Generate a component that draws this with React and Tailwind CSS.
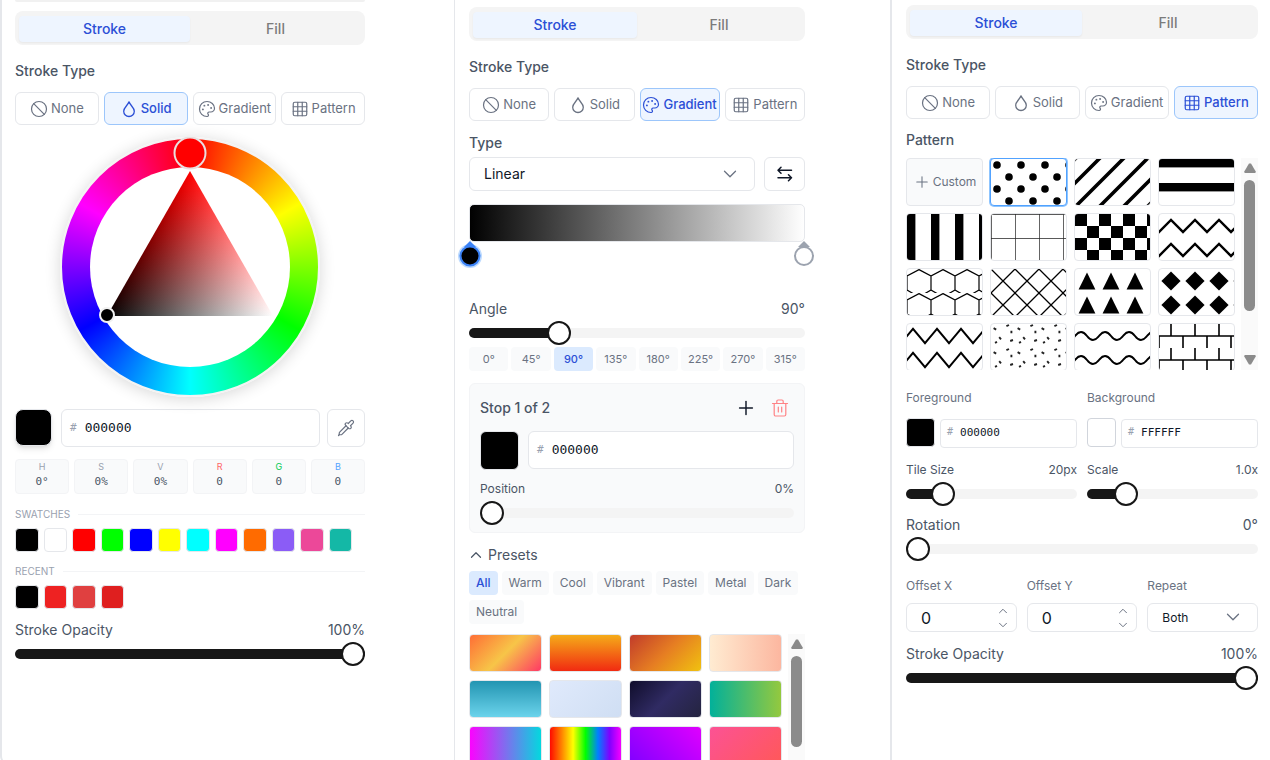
import React, { useState } from "react";
import {
  Ban,
  ChevronDown,
  ChevronUp,
  Grid3x3,
  Palette,
  Pipette,
  Plus,
} from "lucide-react";

const DropIcon = ({ className }) => (
  <svg viewBox="0 0 18 18" fill="none" stroke="currentColor" strokeWidth="1.3" strokeLinejoin="round" className={className}>
    <path d="M9 1.800C8.100 5 3.700 7.600 3.700 11.200a5.300 5.300 0 0 0 10.600 0C14.300 7.600 9.900 5 9 1.800z" />
  </svg>
);

const SwapIcon = ({ className }) => (
  <svg viewBox="0 0 16 16" fill="none" stroke="currentColor" strokeWidth="1.5" strokeLinecap="round" strokeLinejoin="round" className={className}>
    <path d="M14.5 4.2H1M4 1.2l-3 3 3 3M1 11.8h13.5M11.5 8.8l3 3-3 3" />
  </svg>
);

const TrashIcon = ({ className }) => (
  <svg viewBox="0 0 18 18" fill="none" stroke="currentColor" strokeWidth="1.2" strokeLinecap="round" strokeLinejoin="round" className={className}>
    <path d="M1.500 4.500h15M3.200 4.500v11a1.500 1.500 0 0 0 1.500 1.500h8.600a1.500 1.500 0 0 0 1.500-1.500v-11M5.800 4.500V2.300a1.300 1.300 0 0 1 1.300-1.300h3.800a1.300 1.300 0 0 1 1.300 1.300v2.200M7.300 8v5M10.700 8v5" />
  </svg>
);

const strokeTypes = [
  { name: "None", Icon: Ban },
  { name: "Solid", Icon: DropIcon },
  { name: "Gradient", Icon: Palette },
  { name: "Pattern", Icon: Grid3x3 },
];

const channels = [
  { name: "H", value: "0°", color: "text-gray-400" },
  { name: "S", value: "0%", color: "text-gray-400" },
  { name: "V", value: "0%", color: "text-gray-400" },
  { name: "R", value: "0", color: "text-red-400" },
  { name: "G", value: "0", color: "text-green-500" },
  { name: "B", value: "0", color: "text-blue-400" },
];

const swatches = [
  "#000000", "#ffffff", "#ff0000", "#00ff00", "#0000ff", "#ffff00",
  "#00ffff", "#ff00ff", "#ff6b00", "#8b5cf6", "#ec4899", "#14b8a6",
];
const recent = ["#000000", "#ee2222", "#e04040", "#df1f1f"];

const angles = [0, 45, 90, 135, 180, 225, 270, 315];
const categories = ["All", "Warm", "Cool", "Vibrant", "Pastel", "Metal", "Dark", "Neutral"];

const presets = [
  "linear-gradient(135deg, #ff6b35, #f7c548 50%, #ff3366)",
  "linear-gradient(180deg, #f5af19, #f12711)",
  "linear-gradient(135deg, #c0392b, #e67e22 50%, #f1c40f)",
  "linear-gradient(90deg, #ffecd2, #fcb69f)",
  "linear-gradient(180deg, #2193b0, #6dd5ed)",
  "linear-gradient(135deg, #e0eafc, #cfdef3)",
  "linear-gradient(135deg, #0f0c29, #302b63 50%, #24243e)",
  "linear-gradient(90deg, #00b09b, #96c93d)",
  "linear-gradient(90deg, #ff00ff, #00dbde)",
  "linear-gradient(90deg, #ff0000, #ff8000 17%, #ffff00 33%, #00ff00 50%, #0080ff 67%, #8000ff 83%, #ff00ff)",
  "linear-gradient(45deg, #7f00ff, #e100ff)",
  "linear-gradient(135deg, #fc5296, #ff5858)",
];

// every pattern is drawn on a 24 x 24 tile
const patterns = [
  {
    name: "Dots",
    shape: (
      <>
        <circle cx="6" cy="6" r="3.8" />
        <circle cx="18" cy="18" r="3.8" />
      </>
    ),
  },
  { name: "Diagonal", shape: <path d="M-6 30L30-6M-6 6L6-6M18 30L30 18" stroke="#000" strokeWidth="3.6" /> },
  { name: "Horizontal", shape: <rect width="24" height="8.4" /> },
  { name: "Vertical", shape: <rect width="8.4" height="24" /> },
  { name: "Grid", shape: <path d="M24 0H0V24" fill="none" stroke="#222" strokeWidth="1.4" /> },
  { name: "Checkerboard", shape: <path d="M0 0h12v12H0zM12 12h12v12H12z" /> },
  { name: "Chevron", shape: <path d="M-6 12L0 18 12 6l12 12 6-6" fill="none" stroke="#000" strokeWidth="2.4" /> },
  { name: "Hexagon", shape: <path d="M12 0.6L24 7v14l-12 7L0 21V7z" fill="none" stroke="#000" strokeWidth="1.2" /> },
  { name: "Crosshatch", shape: <path d="M-1-1L25 25M25-1L-1 25" stroke="#000" strokeWidth="1.3" /> },
  { name: "Triangles", shape: <path d="M12 3.6l8.4 16.8H3.6z" /> },
  { name: "Diamonds", shape: <path d="M12 2.4l9.6 9.6-9.6 9.6L2.4 12z" /> },
  { name: "Zigzag", shape: <path d="M-6 19.2L6 4.8l12 14.4L30 4.8" fill="none" stroke="#000" strokeWidth="2" /> },
  {
    name: "Confetti",
    shape: (
      <path
        d="M2.6 4.2l2.6 1.400M15.400 2.200l2.600-1.200M20.400 6.800v2.400M8.200 13.200l1.800 2.200M4 18.800l2-1M19.200 17l2.800-1"
        stroke="#222"
        strokeWidth="1.9"
      />
    ),
  },
  { name: "Waves", shape: <path d="M-12 12Q-6 20 0 12T12 12 24 12 36 12" fill="none" stroke="#000" strokeWidth="2" /> },
  { name: "Brick", shape: <path d="M12 0v12M0 12h24M0 12v12M24 12v12" stroke="#000" strokeWidth="1.6" /> },
];

const Tabs = () => (
  <div className="flex h-[34px] rounded-lg bg-[#f4f4f4] pt-[5px] pr-1 pb-[3px] pl-1 text-sm font-medium">
    <button type="button" className="flex flex-1 items-center justify-center rounded bg-[#eef5ff] text-[#2b4fd6] shadow-xs">
      Stroke
    </button>
    <button type="button" className="flex flex-1 items-center justify-center text-[#7b7b7b]">
      Fill
    </button>
  </div>
);

const StrokeType = ({ active }) => (
  <>
    <h2 className="mt-4 text-sm font-medium text-gray-600">Stroke Type</h2>
    <div className="mt-[11px] grid grid-cols-4 gap-[5px]">
      {strokeTypes.map(({ name, Icon }) => (
        <button
          key={name}
          type="button"
          className={
            name === active
              ? "flex h-[33px] items-center justify-center gap-[3px] rounded-md border border-[#9cc6fb] bg-[#eef5ff] text-[13px] font-medium text-[#2b4fd6]"
              : "flex h-[33px] items-center justify-center gap-[3px] rounded-md border border-gray-200 text-[13px] text-gray-500"
          }
        >
          <Icon className="size-[18px] shrink-0" strokeWidth={1.6} />
          {name}
        </button>
      ))}
    </div>
  </>
);

const Slider = ({ label, min = 0, max = 100, step = 1, initial, format, small, className }) => {
  const [value, setValue] = useState(initial);
  const percent = ((value - min) / (max - min)) * 100;
  return (
    <label className={`flex flex-col text-gray-600 ${className}`}>
      <span className={small ? "flex justify-between text-xs" : "flex justify-between text-sm"}>
        <span>{label}</span>
        <span>{format(value)}</span>
      </span>
      <input
        type="range"
        min={min}
        max={max}
        step={step}
        value={value}
        onChange={(e) => setValue(Number(e.target.value))}
        className={`${small ? "mt-[11px]" : "mt-[9px]"} h-[10px] w-full appearance-none rounded-full [&::-webkit-slider-thumb]:size-6 [&::-webkit-slider-thumb]:appearance-none [&::-webkit-slider-thumb]:rounded-full [&::-webkit-slider-thumb]:border-2 [&::-webkit-slider-thumb]:border-[#171717] [&::-webkit-slider-thumb]:bg-white`}
        style={{ background: `linear-gradient(to right, #171717 ${percent}%, #f4f4f4 ${percent}%)` }}
      />
    </label>
  );
};

const HexInput = ({ label, initial, small }) => {
  const [hex, setHex] = useState(initial);
  return (
    <label
      className={
        small
          ? "flex h-[29px] min-w-0 flex-1 items-center gap-[7px] self-end rounded border border-gray-200 bg-white px-[6px]"
          : "flex h-[38px] min-w-0 flex-1 items-center gap-2 rounded-md border border-gray-200 bg-white px-2"
      }
    >
      <span className={small ? "pb-1 font-['DejaVu_Sans_Mono',monospace] text-[10px] text-gray-400" : "font-['DejaVu_Sans_Mono',monospace] text-[11px] text-gray-400"}>
        #
      </span>
      <input
        aria-label={label}
        value={hex}
        onChange={(e) => setHex(e.target.value)}
        className={
          small
            ? "w-full min-w-0 font-['DejaVu_Sans_Mono',monospace] text-[11px] text-gray-900 outline-none"
            : "w-full min-w-0 font-['DejaVu_Sans_Mono',monospace] text-[13px] text-gray-900 outline-none"
        }
      />
    </label>
  );
};

const ColorWheel = () => (
  <div className="relative mx-auto mt-3 size-[260px] rounded-full border-2 border-[#f3f3f3] bg-[conic-gradient(#f00,#ff0,#0f0,#0ff,#00f,#f0f,#f00)] p-7 shadow-[0_2px_16px_rgba(0,0,0,0.16)]">
    <div className="size-full rounded-full bg-white" />
    <svg viewBox="-130 -130 260 260" className="absolute -inset-[2px]">
      <defs>
        <linearGradient id="hueFade" gradientUnits="userSpaceOnUse" x1="0" y1="49" x2="0" y2="-96">
          <stop offset="0" stopColor="#000" />
          <stop offset="1" stopColor="#f00" />
        </linearGradient>
        <linearGradient id="whiteFade" gradientUnits="userSpaceOnUse" x1="-41.5" y1="-23.5" x2="83" y2="49">
          <stop offset="0" stopColor="#000" />
          <stop offset="1" stopColor="#fff" />
        </linearGradient>
        <clipPath id="triangle">
          <path d="M0-96L83 49H-83z" />
        </clipPath>
      </defs>
      <g className="isolate" clipPath="url(#triangle)">
        <rect x="-90" y="-100" width="180" height="155" fill="url(#hueFade)" />
        <rect x="-90" y="-100" width="180" height="155" fill="url(#whiteFade)" className="mix-blend-plus-lighter" />
      </g>
      <circle cx="0" cy="-114" r="15.5" fill="#f00" stroke="#eadede" strokeWidth="2" />
      <circle cx="-83" cy="48" r="7" fill="#000" stroke="#f1f1f1" strokeWidth="2" />
    </svg>
  </div>
);

const SwatchRow = ({ title, colors, className }) => (
  <div className={className}>
    <div className="flex items-center gap-2 text-[10px] leading-4 text-gray-400">
      {title}
      <span className="h-px flex-1 bg-gray-100" />
    </div>
    <div className="mt-[6px] grid grid-cols-12 gap-[5px] pr-[13px]">
      {colors.map((color) => (
        <button
          key={color}
          type="button"
          aria-label={color}
          className="h-6 rounded border border-gray-200"
          style={{ backgroundColor: color }}
        />
      ))}
    </div>
  </div>
);

const ScrollArrow = ({ down }) => (
  <svg viewBox="0 0 12 10" className="h-[10px] w-3 fill-[#8b8b8b]">
    {down ? <path d="M1 0h10l1 1-5 8.500H5L0 1z" /> : <path d="M1 10h10l1-1L7 .5H5L0 9z" />}
  </svg>
);

const SolidPanel = () => (
  <section className="pr-[89px] pl-[13px]">
    <div className="h-[2px] rounded-b bg-[#f1f1f1]" />
    <div className="pt-[9px]">
      <Tabs />
      <StrokeType active="Solid" />
      <ColorWheel />
      <div className="mt-3 flex gap-[7px]">
        <button type="button" aria-label="Current color" className="mr-[2px] size-[37px] rounded-lg border border-gray-200 bg-black shadow-md" />
        <HexInput label="Stroke color" initial="000000" />
        <button type="button" aria-label="Pick color" className="flex size-[38px] items-center justify-center rounded-md border border-gray-200 text-gray-500">
          <Pipette className="size-[18px]" strokeWidth={1.6} />
        </button>
      </div>
      <dl className="mt-3 grid grid-cols-6 gap-[5px]">
        {channels.map((channel) => (
          <div key={channel.name} className="h-[35px] rounded border border-gray-100 bg-gray-50 text-center">
            <dt className={`text-[9px] leading-[14px] ${channel.color}`}>{channel.name}</dt>
            <dd className="font-['DejaVu_Sans_Mono',monospace] text-[11px] leading-4 text-gray-600">{channel.value}</dd>
          </div>
        ))}
      </dl>
      <SwatchRow title="SWATCHES" colors={swatches} className="mt-3" />
      <SwatchRow title="RECENT" colors={recent} className="mt-[11px]" />
      <Slider label="Stroke Opacity" initial={100} format={(v) => `${v}%`} className="mt-[11px]" />
    </div>
  </section>
);

const GradientPanel = () => (
  <section className="border-l border-gray-200 pt-[7px] pr-[85px] pl-[14px]">
    <Tabs />
    <StrokeType active="Gradient" />
    <label htmlFor="gradient-type" className="mt-3 block text-sm font-medium text-gray-600">
      Type
    </label>
    <div className="mt-1 flex gap-[9px]">
      <div className="relative flex-1">
        <select id="gradient-type" className="h-[34px] w-full appearance-none rounded-md border border-gray-200 px-[14px] text-sm text-gray-900">
          <option>Linear</option>
          <option>Radial</option>
        </select>
        <ChevronDown className="pointer-events-none absolute top-[6px] right-[14px] size-[22px] text-gray-500" strokeWidth={1.4} />
      </div>
      <button type="button" aria-label="Reverse gradient" className="flex h-[34px] w-[41px] items-center justify-center rounded-md border border-gray-200 text-gray-900">
        <SwapIcon className="size-4" />
      </button>
    </div>
    <div className="relative mt-[13px] h-[38px] rounded-[5px] border border-gray-200 bg-[linear-gradient(to_right,#000,#fff)] bg-origin-border">
      <button type="button" aria-label="Stop 1" className="absolute top-full -left-3 w-6">
        <svg viewBox="0 0 24 28" className="w-6">
          <circle cx="12" cy="15" r="12" fill="#bfdbfe" />
          <path d="M12 0l6 6H6z" fill="#3b82f6" />
          <circle cx="12" cy="15" r="9.5" fill="#000" stroke="#3b82f6" strokeWidth="2" />
        </svg>
      </button>
      <button type="button" aria-label="Stop 2" className="absolute top-full -right-3 w-6">
        <svg viewBox="0 0 24 28" className="w-6">
          <path d="M12 0l6 6H6z" fill="#9ca3af" />
          <circle cx="12" cy="15" r="9" fill="#fff" stroke="#9ca3af" strokeWidth="2" />
        </svg>
      </button>
    </div>
    <Slider label="Angle" max={360} initial={90} format={(v) => `${v}°`} className="mt-[57px]" />
    <div className="mt-[9px] grid grid-cols-8 gap-[3px]">
      {angles.map((angle) => (
        <button
          key={angle}
          type="button"
          className={
            angle === 90
              ? "h-6 rounded bg-blue-100 text-[11px] font-medium text-[#2b4fd6]"
              : "h-6 rounded bg-gray-50 text-[11px] text-gray-500"
          }
        >
          {angle}°
        </button>
      ))}
    </div>
    <div className="mt-3 rounded-md border border-gray-100 bg-gray-50 px-[10px] pt-[13px] pb-[14px]">
      <div className="flex items-center text-sm font-medium text-gray-600">
        <span className="flex-1">Stop 1 of 2</span>
        <button type="button" aria-label="Add stop" className="mr-[14px] text-gray-900">
          <Plus className="size-[22px]" strokeWidth={1.6} />
        </button>
        <button type="button" aria-label="Delete stop" className="mr-[5px] text-red-400/80">
          <TrashIcon className="size-[18px]" />
        </button>
      </div>
      <div className="mt-3 flex gap-[9px]">
        <button type="button" aria-label="Stop color" className="size-[39px] rounded-md border border-gray-200 bg-black" />
        <HexInput label="Stop color value" initial="000000" />
      </div>
      <Slider label="Position" small initial={0} format={(v) => `${v}%`} className="mt-[11px]" />
    </div>
    <button type="button" className="mt-3 flex items-center gap-[3px] text-sm text-gray-600">
      <ChevronUp className="-ml-[2px] size-[18px]" strokeWidth={1.6} />
      Presets
    </button>
    <div className="mt-[6px] flex flex-wrap gap-x-1 gap-y-[5px]">
      {categories.map((category) => (
        <button
          key={category}
          type="button"
          className={
            category === "All"
              ? "h-6 rounded bg-blue-100 px-[7px] text-xs font-medium text-[#2b4fd6]"
              : "h-6 rounded bg-gray-50 px-[7px] text-xs text-gray-500"
          }
        >
          {category}
        </button>
      ))}
    </div>
    <div className="mt-[10px] flex gap-[6px]">
      <div className="grid flex-1 grid-cols-4 gap-x-[7px] gap-y-2">
        {presets.map((preset) => (
          <button
            key={preset}
            type="button"
            aria-label="Gradient preset"
            className="h-[38px] rounded border border-gray-200 bg-origin-border"
            style={{ backgroundImage: preset }}
          />
        ))}
      </div>
      <div className="flex w-[17px] flex-col items-center bg-[#fafafa] pt-[5px]">
        <ScrollArrow />
        <div className="mt-[7px] h-[91px] w-[11px] rounded-full bg-[#8b8b8b]" />
      </div>
    </div>
  </section>
);

const PatternTile = ({ pattern, selected }) => (
  <button
    type="button"
    aria-label={pattern.name}
    className={
      selected
        ? "h-12 overflow-hidden rounded border border-blue-400 bg-white ring-1 ring-blue-300"
        : "h-12 overflow-hidden rounded border border-gray-200 bg-white"
    }
  >
    <svg className="block size-full">
      <pattern id={`pattern-${pattern.name}`} width="24" height="24" patternUnits="userSpaceOnUse">
        {pattern.shape}
      </pattern>
      <rect width="100%" height="100%" fill={`url(#pattern-${pattern.name})`} />
    </svg>
  </button>
);

const OffsetInput = ({ label }) => {
  const [value, setValue] = useState(0);
  return (
    <div>
      <label htmlFor={label} className="block text-xs text-gray-500">
        {label}
      </label>
      <div className="mt-[9px] flex h-[29px] items-center rounded-md border border-gray-200 pr-[6px] pl-[14px]">
        <input
          id={label}
          inputMode="numeric"
          value={value}
          onChange={(e) => setValue(e.target.value)}
          className="w-full min-w-0 text-base text-gray-900 outline-none"
        />
        <div className="flex flex-col text-gray-500">
          <button type="button" aria-label={`Increase ${label}`} onClick={() => setValue(Number(value) + 1)}>
            <ChevronUp className="size-[14px]" strokeWidth={1.7} />
          </button>
          <button type="button" aria-label={`Decrease ${label}`} onClick={() => setValue(Number(value) - 1)}>
            <ChevronDown className="size-[14px]" strokeWidth={1.7} />
          </button>
        </div>
      </div>
    </div>
  );
};

const PatternPanel = () => (
  <section className="mb-[3px] border-l-2 border-gray-200 pt-[5px] pr-3 pl-[14px]">
    <Tabs />
    <StrokeType active="Pattern" />
    <h2 className="mt-[11px] text-sm font-medium text-gray-600">Pattern</h2>
    <div className="mt-2 flex h-[212px] gap-[6px] overflow-hidden">
      <div className="grid flex-1 auto-rows-max grid-cols-4 gap-[7px]">
        <button type="button" className="flex h-12 items-center justify-center gap-[2px] rounded border border-gray-200 bg-gray-50 text-xs text-gray-500">
          <Plus className="size-[18px] shrink-0" strokeWidth={1.4} />
          Custom
        </button>
        {patterns.map((pattern) => (
          <PatternTile key={pattern.name} pattern={pattern} selected={pattern.name === "Dots"} />
        ))}
      </div>
      <div className="flex w-[17px] flex-col items-center bg-[#fafafa] py-[5px]">
        <ScrollArrow />
        <div className="mt-[7px] mb-auto h-[131px] w-[11px] rounded-full bg-[#8b8b8b]" />
        <ScrollArrow down />
      </div>
    </div>
    <div className="mt-5 grid grid-cols-2 gap-x-[10px]">
      <div>
        <h3 className="text-xs text-gray-500">Foreground</h3>
        <div className="mt-3 flex h-[30px] gap-[5px]">
          <button type="button" aria-label="Foreground color" className="size-[29px] rounded border border-gray-200 bg-black" />
          <HexInput label="Foreground value" initial="000000" small />
        </div>
      </div>
      <div>
        <h3 className="text-xs text-gray-500">Background</h3>
        <div className="mt-3 flex h-[30px] gap-[5px]">
          <button type="button" aria-label="Background color" className="size-[29px] rounded border border-gray-300 bg-white" />
          <HexInput label="Background value" initial="FFFFFF" small />
        </div>
      </div>
      <Slider label="Tile Size" small min={4} max={100} initial={20} format={(v) => `${v}px`} className="mt-[14px]" />
      <Slider label="Scale" small min={0.1} max={5} step={0.1} initial={1} format={(v) => `${v.toFixed(1)}x`} className="mt-[14px]" />
    </div>
    <Slider label="Rotation" max={360} initial={0} format={(v) => `${v}°`} className="mt-4" />
    <div className="mt-6 grid grid-cols-3 gap-[10px]">
      <OffsetInput label="Offset X" />
      <OffsetInput label="Offset Y" />
      <div>
        <label htmlFor="repeat" className="block text-xs text-gray-500">
          Repeat
        </label>
        <div className="relative mt-[9px]">
          <select id="repeat" className="h-[29px] w-full appearance-none rounded-md border border-gray-200 px-[14px] text-xs text-gray-900">
            <option>Both</option>
            <option>Horizontal</option>
            <option>Vertical</option>
          </select>
          <ChevronDown className="pointer-events-none absolute top-[3px] right-[14px] size-[22px] text-gray-500" strokeWidth={1.4} />
        </div>
      </div>
    </div>
    <Slider label="Stroke Opacity" initial={100} format={(v) => `${v}%`} className="mt-3" />
  </section>
);

export default function App() {
  return (
    <main className="grid h-screen grid-cols-[454fr_436fr_380fr] overflow-hidden bg-white font-['Inter',sans-serif]">
      <div className="min-w-0 rounded-bl-lg border-b border-l-2 border-b-transparent border-l-gray-200">
        <SolidPanel />
      </div>
      <GradientPanel />
      <PatternPanel />
    </main>
  );
}
